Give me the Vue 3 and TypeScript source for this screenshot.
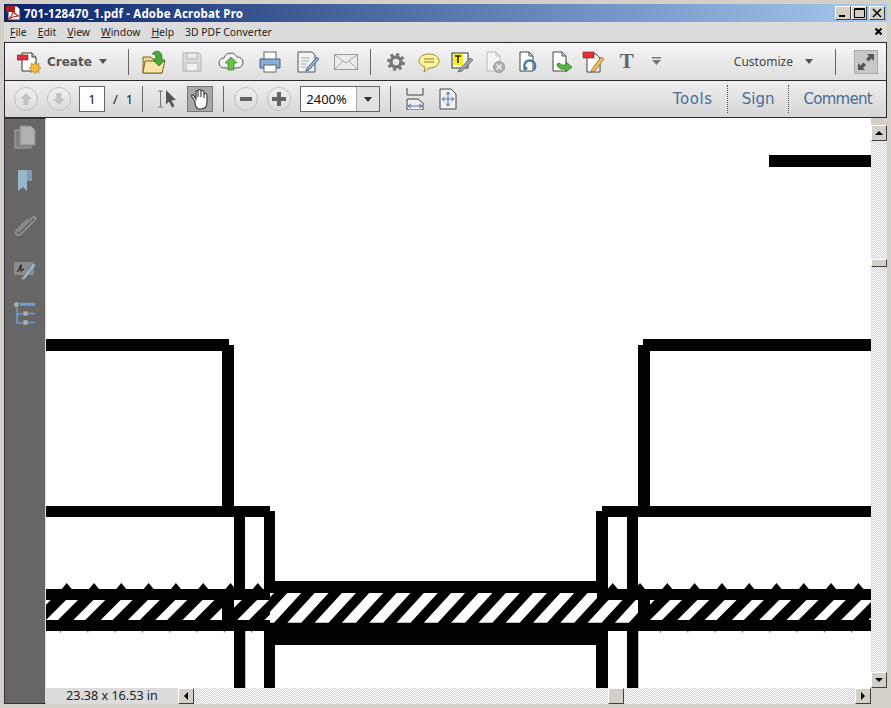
<script setup lang="ts">
type Box = [number, number, number, number]

// drawing coordinates are page pixels, the svg viewBox starts at the canvas corner
const boxes: Box[] = [
  [769, 155, 871, 167],
  [46, 339, 229, 351],
  [222, 345, 234, 511],
  [643, 339, 871, 351],
  [638, 345, 650, 511],
  [46, 506, 270, 517],
  [602, 506, 871, 517],
  [234, 517, 245, 688],
  [264, 511, 275, 688],
  [596, 511, 608, 688],
  [627, 517, 638, 688],
  [46, 589, 270, 631],
  [602, 589, 871, 631],
  [270, 581, 602, 645],
]

// black that sits over the hatching
const overlays: Box[] = [
  [222, 600, 234, 620],
  [597, 593, 640, 600],
]

const PITCH = 27.3

function range(start: number, end: number, step: number) {
  const out: number[] = []
  for (let x = start; x < end; x += step) out.push(x)
  return out
}

function stripe(x: number, top: number, bottom: number, w: number, dx: number) {
  return `${x + dx},${top} ${x + dx + w},${top} ${x + w},${bottom} ${x},${bottom}`
}

const leftStripes = range(46 - PITCH, 270, PITCH).map((x) => stripe(x, 600, 620, 12, 20))
const midStripes = range(260 - PITCH, 638, PITCH).map((x) => stripe(x, 593, 622.7, 14, 27.3))
const rightStripes = range(650 - PITCH, 871, PITCH).map((x) => stripe(x, 600, 620, 12, 20))

const peaks = [...range(66.7, 270, PITCH), ...range(612.7, 871, PITCH)]
const ticks = [...range(60, 270, PITCH), ...range(660, 871, PITCH)]
</script>

<template>
  <div class="window">
    <div class="titlebar">
      <svg class="pdf-icon" width="16" height="16" viewBox="0 0 16 16">
        <path d="M2 1h9l3 3v11H2z" fill="#fff" stroke="#333" />
        <path d="M0 1h9v6H0z" fill="#b01c1c" />
        <path d="M3 14c2-2 4-6 4-9 1 3 3 5 6 6-3 0-7 1-10 3z" fill="none" stroke="#c22" stroke-width="1.2" />
      </svg>
      <span class="title-text">701-128470_1.pdf - Adobe Acrobat Pro</span>
      <div class="caption-btns">
        <button class="cap"><svg width="10" height="10"><rect x="1" y="7" width="6" height="2" fill="#000" /></svg></button>
        <button class="cap"><svg width="11" height="10"><path d="M.5 .5h10v9H.5zM.5 1.5h10" fill="none" stroke="#000" /></svg></button>
        <button class="cap close"><svg width="10" height="10"><path d="M1 1l8 8M9 1l-8 8" stroke="#000" stroke-width="1.5" /></svg></button>
      </div>
    </div>

    <div class="menubar">
      <span class="menu"><u>F</u>ile</span>
      <span class="menu"><u>E</u>dit</span>
      <span class="menu"><u>V</u>iew</span>
      <span class="menu"><u>W</u>indow</span>
      <span class="menu"><u>H</u>elp</span>
      <span class="menu">3D PDF Converter</span>
      <svg class="menu-close" width="9" height="9"><path d="M1.5 1.5l6 6M7.5 1.5l-6 6" stroke="#000" stroke-width="2.2" /></svg>
    </div>

    <div class="toolbar top">
      <svg class="create-icon" width="24" height="24" viewBox="0 0 24 24">
        <path d="M5 3h10l4 4v14H5z" fill="#fff" stroke="#333" />
        <path d="M15 3v4h4" fill="#ddd" stroke="#333" />
        <rect x="0" y="5" width="11" height="5" fill="#e0303a" stroke="#8a1a20" stroke-width=".6" />
        <path d="M18 12l1.500 2.500 2.500-1-.5 2.800 2.500 1.700-2.500 1.700.5 2.800-2.500-1-1.500 2-1.500-2-2.500 1 .5-2.800-2.500-1.700 2.500-1.700-.5-2.800 2.500 1z" fill="#f4bc3c" stroke="#a9781c" stroke-width=".7" />
      </svg>
      <span class="create-label">Create</span>
      <span class="caret create-caret"></span>
      <i class="sep sep-a"></i>

      <div class="icons wide">
        <svg width="24" height="26" viewBox="0 0 24 26">
          <path d="M1 8h8l2 2h9v14H1z" fill="#f0d890" stroke="#7a6420" />
          <path d="M3 12h20l-3 12H1z" fill="#f7e4a8" stroke="#7a6420" />
          <path d="M10 5c3-4 9-4 10 2v4h3l-6 6-6-6h3V8c-1-3-3-3-4-3z" fill="#4aa83c" stroke="#256f1c" stroke-width=".7" />
        </svg>
        <svg width="24" height="24" viewBox="0 0 24 24">
          <path d="M3 3h16l2 2v16H3z" fill="#dcdcdc" stroke="#b4b4b4" />
          <rect x="7" y="3" width="10" height="6" fill="#ececec" stroke="#b4b4b4" />
          <rect x="6" y="13" width="12" height="8" fill="#f0f0f0" stroke="#b4b4b4" />
        </svg>
        <svg width="26" height="24" viewBox="0 0 26 24">
          <path d="M6 18a5 5 0 0 1 0-10 7 7 0 0 1 13-1 5.500 5.500 0 0 1 1 11z" fill="#f2f2f2" stroke="#5c5c5c" />
          <path d="M13 7l6 6h-3v7h-6v-7H7z" fill="#66c04c" stroke="#2f7f24" stroke-width=".7" />
        </svg>
        <svg width="24" height="24" viewBox="0 0 24 24">
          <rect x="6" y="2" width="12" height="8" fill="#fff" stroke="#666" />
          <path d="M2 9h20v9H2z" fill="#86aed8" stroke="#45607e" />
          <rect x="6" y="15" width="12" height="7" fill="#fff" stroke="#666" />
        </svg>
        <svg width="24" height="24" viewBox="0 0 24 24">
          <path d="M2 2h14l3 3v17H2z" fill="#f4f4f4" stroke="#555" />
          <path d="M5 8h9M5 11h8M5 14h6M5 17h5" stroke="#aaa" />
          <path d="M11 18l10-11 2 2-10 11-3 1z" fill="#8eb2d8" stroke="#35506e" stroke-width=".8" />
        </svg>
        <svg width="24" height="24" viewBox="0 0 24 24">
          <rect x=".5" y="4.500" width="23" height="15" fill="#ececec" stroke="#9a9a9a" />
          <path d="M1 5l11 8 11-8M1 19l8-8M23 19l-8-8" fill="none" stroke="#a8a8a8" />
        </svg>
      </div>
      <i class="sep sep-b"></i>

      <div class="icons narrow">
        <svg width="24" height="24" viewBox="0 0 24 24">
          <circle cx="12" cy="12" r="5" fill="none" stroke="#777" stroke-width="3.500" />
          <circle cx="12" cy="12" r="7.500" fill="none" stroke="#777" stroke-width="3" stroke-dasharray="2.900 2.990" />
        </svg>
        <svg width="24" height="24" viewBox="0 0 24 24">
          <path d="M12 4c6 0 10 3 10 7s-4 7-10 7l-5 4 1-5c-3-1-6-3-6-6 0-4 4-7 10-7z" fill="#fdf39c" stroke="#9a8a2c" />
          <path d="M7 9h10M7 12h10" stroke="#8a7c30" />
        </svg>
        <svg width="24" height="24" viewBox="0 0 24 24">
          <rect x="2" y="3" width="16" height="15" fill="#fff" stroke="#333" />
          <rect x="3" y="4" width="10" height="11" fill="#fcec20" />
          <path d="M5 6h6M8 6v7" stroke="#222" stroke-width="1.500" />
          <path d="M9 20l11-12 3 2-11 11-4 1z" fill="#9aa2ac" stroke="#555" stroke-width=".7" />
        </svg>
        <svg width="24" height="24" viewBox="0 0 24 24">
          <path d="M4 2h9l4 4v15H4z" fill="#f4f4f4" stroke="#bababa" />
          <path d="M13 2v4h4" fill="none" stroke="#bababa" />
          <circle cx="16" cy="17" r="5.500" fill="#b0b0b0" stroke="#999" />
          <path d="M13.500 14.500l5 5M18.500 14.500l-5 5" stroke="#f0f0f0" stroke-width="1.400" />
        </svg>
        <svg width="24" height="24" viewBox="0 0 24 24">
          <path d="M4 2h9l4 4v15H4z" fill="#fff" stroke="#444" />
          <path d="M13 2v4h4" fill="none" stroke="#444" />
          <path d="M10 20a5.500 5.500 0 1 1 7.500 0" fill="none" stroke="#4a78ac" stroke-width="2.400" />
          <path d="M7 20l5-1-2-3z" fill="#4a78ac" />
        </svg>
        <svg width="24" height="24" viewBox="0 0 24 24">
          <path d="M4 2h9l4 4v15H4z" fill="#fff" stroke="#444" />
          <path d="M13 2v4h4" fill="none" stroke="#444" />
          <path d="M8 14c0 4 4 6 9 5v3l6-5-6-5v3c-4 0-6 0-6-2z" fill="#5cb23e" stroke="#2d7720" stroke-width=".7" />
        </svg>
        <svg width="24" height="24" viewBox="0 0 24 24">
          <path d="M5 4h9l4 4v14H5z" fill="#fff" stroke="#444" />
          <rect x="1" y="2" width="11" height="6" fill="#e0303a" stroke="#8a1a20" stroke-width=".6" />
          <path d="M10 19l9-12 3 2-9 12-4 1z" fill="#f0b860" stroke="#9c6a20" stroke-width=".8" />
        </svg>
        <span class="text-tool">T</span>
      </div>

      <svg class="more" width="9" height="9" viewBox="0 0 9 9">
        <path d="M0 0h9v1.500H0zM0 3h9L4.500 8z" fill="#777" />
      </svg>
      <span class="customize">Customize</span>
      <span class="caret customize-caret"></span>
      <i class="sep sep-c"></i>
      <span class="expand">
        <svg width="20" height="20" viewBox="0 0 20 20">
          <path d="M11 2h7v7l-2.500-2.500-3 3-2.500-2.500 3-3zM9 18H2v-7l2.500 2.500 3-3 2.500 2.500-3 3z" fill="#555" />
        </svg>
      </span>
    </div>

    <div class="toolbar second">
      <span class="round"><svg width="14" height="14" viewBox="0 0 14 14"><path d="M7 1l6 6H9.500v6h-5V7H1z" fill="#c2c2c2" /></svg></span>
      <span class="round next"><svg width="14" height="14" viewBox="0 0 14 14"><path d="M7 13L1 7h3.500V1h5v6H13z" fill="#c2c2c2" /></svg></span>
      <span class="page-box">1</span>
      <span class="page-total">/</span>
      <span class="page-count">1</span>
      <i class="sep sep-d"></i>
      <svg class="select-tool" width="20" height="20" viewBox="0 0 20 20">
        <path d="M1 2h5M1 18h5M3.500 2v16" stroke="#777" fill="none" />
        <path d="M9 1l10 10-4.500 .5 3 5.500-2.500 1.500-3-6-3 3z" fill="#555" />
      </svg>
      <span class="hand">
        <svg width="20" height="21" viewBox="0 0 20 21">
          <path d="M5 12L2 8c-1-2 1-3 2-1l2 3V3c0-2 2-2 2 0v5-6c0-2 3-2 3 0v6-5c0-2 3-2 3 0v6-3c0-2 3-2 3 0v7c0 4-2 7-6 7H9c-2 0-3-2-4-5z" fill="#fff" stroke="#333" stroke-width="1.100" />
        </svg>
      </span>
      <i class="sep sep-e"></i>
      <span class="round zoom-out"><svg width="14" height="14" viewBox="0 0 14 14"><rect x="1" y="5" width="12" height="4" fill="#666" /></svg></span>
      <span class="round zoom-in"><svg width="16" height="16" viewBox="0 0 16 16"><path d="M6 1h4v5h5v4h-5v5H6v-5H1V6h5z" fill="#666" /></svg></span>
      <div class="zoom-box">
        <span class="zoom-value">2400%</span>
        <span class="zoom-drop"><span class="caret dark"></span></span>
      </div>
      <i class="sep sep-f"></i>
      <svg class="fit-width" width="18" height="22" viewBox="0 0 18 22">
        <path d="M1 0v7h16V0" fill="#e8e8e8" stroke="#444" />
        <path d="M1 11h11l5 4v7H1z" fill="#eee" stroke="#444" />
        <path d="M2 18h14M2 18l3-2M2 18l3 2M16 18l-3-2M16 18l-3 2" stroke="#4a72b0" fill="none" />
      </svg>
      <svg class="fit-page" width="18" height="22" viewBox="0 0 18 22">
        <path d="M1 1h11l5 5v15H1z" fill="#f2f2f2" stroke="#444" />
        <path d="M9 4v14M3 11h12M9 4L7 6.500M9 4l2 2.500M9 18l-2-2.500M9 18l2-2.500M3 11l2.500-2M3 11l2.500 2M15 11l-2.500-2M15 11l-2.500 2" stroke="#4a72b0" fill="none" />
      </svg>
      <span class="pane tools">Tools</span>
      <i class="dots"></i>
      <span class="pane">Sign</span>
      <i class="dots"></i>
      <span class="pane comment">Comment</span>
    </div>

    <div class="workspace">
      <aside class="sidebar">
        <svg width="24" height="24" viewBox="0 0 24 24">
          <rect x="2" y="5" width="16" height="18" fill="#808080" stroke="#a4a4a4" />
          <path d="M7 1h11l4 4v15H7z" fill="#b0b0b0" stroke="#8a8a8a" />
        </svg>
        <svg width="24" height="24" viewBox="0 0 24 24">
          <path d="M5 1h14v11h-5v10l-4-4-5 4z" fill="#9ab4c8" />
          <path d="M14 1h5v11h-5z" fill="#7e9cb6" />
        </svg>
        <svg width="24" height="24" viewBox="0 0 24 24">
          <path d="M5 19L19 5c3-3 5 0 3 2L8 21c-4 3-7-1-4-4L15 6" fill="none" stroke="#9a9a9a" stroke-width="1.400" />
        </svg>
        <svg width="24" height="24" viewBox="0 0 24 24">
          <rect x="1" y="5" width="20" height="13" fill="#8c8c8c" />
          <path d="M4 15c2-1 3-6 4-7 1 1-1 5 0 6l3-2" fill="none" stroke="#222" stroke-width="1.200" />
          <path d="M9 21l11-15 3 2-11 14-4 1z" fill="#9ab4c8" stroke="#666" stroke-width=".5" />
        </svg>
        <svg width="24" height="24" viewBox="0 0 24 24">
          <path d="M4 4v18h6M4 13h6M7 4h15M7 2.500h15" fill="none" stroke="#6f9fd0" stroke-width="1.500" />
          <rect x="1" y="1" width="5" height="5" fill="#b0b0b0" stroke="#555" stroke-width=".5" />
          <rect x="10" y="10" width="5" height="5" fill="#b0b0b0" stroke="#555" stroke-width=".5" />
          <rect x="10" y="19" width="5" height="5" fill="#b0b0b0" stroke="#555" stroke-width=".5" />
          <path d="M15 12.500h7M15 21.500h7" stroke="#6f9fd0" stroke-width="1.500" />
        </svg>
      </aside>

      <div class="center">
        <svg class="page" width="825" height="570" viewBox="46 118 825 570">
          <defs>
            <clipPath id="clip-left"><rect x="46" y="590" width="224" height="40" /></clipPath>
            <clipPath id="clip-mid"><rect x="270" y="590" width="368" height="40" /></clipPath>
            <clipPath id="clip-right"><rect x="650" y="590" width="221" height="40" /></clipPath>
          </defs>
          <rect v-for="(b, i) in boxes" :key="i" :x="b[0]" :y="b[1]" :width="b[2] - b[0]" :height="b[3] - b[1]" shape-rendering="crispEdges" />
          <g clip-path="url(#clip-left)" fill="#fff">
            <polygon v-for="(s, i) in leftStripes" :key="i" :points="s" />
          </g>
          <g clip-path="url(#clip-mid)" fill="#fff">
            <polygon v-for="(s, i) in midStripes" :key="i" :points="s" />
          </g>
          <g clip-path="url(#clip-right)" fill="#fff">
            <polygon v-for="(s, i) in rightStripes" :key="i" :points="s" />
          </g>
          <rect v-for="(b, i) in overlays" :key="'o' + i" :x="b[0]" :y="b[1]" :width="b[2] - b[0]" :height="b[3] - b[1]" shape-rendering="crispEdges" />
          <polygon v-for="x in peaks" :key="'p' + x" :points="`${x - 5},589 ${x},583 ${x + 5},589`" />
          <rect v-for="x in ticks" :key="'t' + x" :x="x" y="631" width="1" height="1.500" fill="#555" />
          <rect x="245" y="631" width="1" height="57" fill="#bbb" />
          <rect x="638" y="631" width="1" height="57" fill="#bbb" />
        </svg>
        <div class="statusbar">
          <span class="page-size">23.38 x 16.53 in</span>
          <button class="arrow"><svg width="6" height="8"><path d="M5 0v8L1 4z" /></svg></button>
          <div class="h-track"><span class="h-thumb"></span></div>
          <button class="arrow"><svg width="6" height="8"><path d="M1 0v8l4-4z" /></svg></button>
        </div>
      </div>

      <div class="v-scroll">
        <span class="v-gap"></span>
        <button class="arrow v"><svg width="8" height="6"><path d="M0 5h8L4 1z" /></svg></button>
        <div class="v-track"><span class="v-thumb"></span></div>
        <button class="arrow v"><svg width="8" height="6"><path d="M0 1h8L4 5z" /></svg></button>
        <span class="corner"></span>
      </div>
    </div>
  </div>
</template>

<style scoped>
.window {
  width: 891px;
  height: 708px;
  box-sizing: border-box;
  padding: 4px;
  background: #d4d0c8;
  display: flex;
  flex-direction: column;
  overflow: hidden;
  font-family: "DejaVu Sans", sans-serif;
  color: #222;
}
.titlebar {
  height: 18px;
  flex: none;
  display: flex;
  align-items: center;
  background: linear-gradient(90deg, #0a246a, #a6caf0);
  color: #fff;
}
.pdf-icon {
  margin: 0 2px 0 2px;
}
.title-text {
  font: bold 11.500px "Noto Sans", sans-serif;
  letter-spacing: 0.17px;
  white-space: nowrap;
}
.caption-btns {
  margin-left: auto;
  margin-right: 2px;
  display: flex;
}
.cap {
  width: 16px;
  height: 14px;
  padding: 0;
  margin: 0;
  display: flex;
  align-items: center;
  justify-content: center;
  background: #d4d0c8;
  border: 1px solid;
  border-color: #fff #404040 #404040 #fff;
}
.close {
  margin-left: 2px;
}
.menubar {
  height: 19px;
  flex: none;
  display: flex;
  align-items: center;
  padding-left: 6px;
  background: #dcdcdc;
  font: 10.400px "Noto Sans", sans-serif;
  color: #222;
}
.menu {
  margin-right: 11px;
}
.menu-close {
  margin-left: auto;
  margin-right: 4px;
}
.toolbar {
  flex: none;
  box-sizing: border-box;
  display: flex;
  align-items: center;
  border: 1px solid #2c2c2c;
  border-width: 1px 1px 0 1px;
}
.top {
  height: 38px;
  margin-top: 1px;
  padding-left: 12px;
  background: linear-gradient(#f6f6f6, #dedede);
  border-bottom: 0;
}
.second {
  height: 38px;
  padding-left: 9px;
  background: linear-gradient(#eeeeee, #d6d6d6);
  border-width: 1px;
  margin-top: 0;
}
.create-label {
  margin-left: 6px;
  font: bold 12px "DejaVu Sans", sans-serif;
  color: #555;
}
.caret {
  width: 0;
  height: 0;
  border: 4px solid transparent;
  border-top: 5px solid #555;
  border-bottom: 0;
}
.create-caret {
  margin-left: 7px;
}
.sep {
  width: 1px;
  height: 26px;
  background: #666;
  flex: none;
}
.sep-a {
  margin-left: 21px;
  margin-right: 13px;
}
.icons {
  display: flex;
  align-items: center;
}
.wide {
  gap: 14px;
}
.narrow {
  gap: 9px;
}
.sep-b {
  margin: 0 13px 0 12px;
}
.text-tool {
  width: 24px;
  text-align: center;
  font: bold 21px "Liberation Serif", serif;
  color: #666;
}
.more {
  margin-left: 13px;
}
.customize {
  margin-left: 73px;
  font: 12px "Noto Sans", sans-serif;
  color: #444;
}
.customize-caret {
  margin-left: 12px;
}
.sep-c {
  margin-left: 22px;
  margin-right: 18px;
}
.expand {
  width: 22px;
  height: 22px;
  display: flex;
  align-items: center;
  justify-content: center;
  background: #c8c8c8;
  border: 1px solid #aaa;
}
.round {
  width: 22px;
  height: 22px;
  flex: none;
  border-radius: 50%;
  border: 1px solid #bdbdbd;
  background: linear-gradient(#f0f0f0, #dcdcdc);
  display: flex;
  align-items: center;
  justify-content: center;
}
.next {
  margin-left: 9px;
}
.page-box {
  margin-left: 8px;
  width: 24px;
  height: 24px;
  border: 1px solid #666;
  background: #fff;
  text-align: center;
  font: 13px/24px "Noto Sans", sans-serif;
  color: #111;
}
.page-total {
  margin-left: 8px;
  font: 13px "Noto Sans", sans-serif;
}
.page-count {
  margin-left: 8px;
  font: 13px "Noto Sans", sans-serif;
}
.sep-d {
  margin-left: 9px;
}
.select-tool {
  margin-left: 14px;
}
.hand {
  margin-left: 10px;
  width: 24px;
  height: 24px;
  display: flex;
  align-items: center;
  justify-content: center;
  background: #a9a9a9;
  border: 1px solid #777;
}
.sep-e {
  margin-left: 10px;
}
.zoom-out {
  margin-left: 10px;
}
.zoom-in {
  margin-left: 9px;
}
.zoom-box {
  margin-left: 9px;
  width: 80px;
  height: 26px;
  box-sizing: border-box;
  border: 1px solid #666;
  background: #fff;
  display: flex;
}
.zoom-value {
  flex: 1;
  padding-left: 5px;
  font: 13px/24px "Noto Sans", sans-serif;
  color: #111;
}
.zoom-drop {
  width: 22px;
  border-left: 1px solid #aaa;
  background: #e2e2e2;
  display: flex;
  align-items: center;
  justify-content: center;
}
.dark {
  border-top-color: #333;
}
.sep-f {
  margin-left: 10px;
}
.fit-width {
  margin-left: 15px;
}
.fit-page {
  margin-left: 15px;
}
.pane {
  font: 15px "DejaVu Sans", sans-serif;
  color: #4a6c98;
}
.tools {
  margin-left: auto;
  letter-spacing: 0.6px;
}
.comment {
  letter-spacing: -0.7px;
  margin-right: 14px;
}
.dots {
  width: 1px;
  height: 28px;
  margin: 0 13px 0 14px;
  border-left: 1px dotted #555;
}
.workspace {
  flex: 1;
  min-height: 0;
  display: flex;
}
.sidebar {
  width: 42px;
  flex: none;
  background: #666;
  border: 1px solid #333;
  border-right-color: #ddd;
  display: flex;
  flex-direction: column;
  align-items: center;
  gap: 20px;
  padding-top: 6px;
  box-sizing: border-box;
}
.center {
  width: 825px;
  flex: none;
  display: flex;
  flex-direction: column;
}
.page {
  display: block;
  background: #fff;
  flex: none;
}
.statusbar {
  height: 16px;
  flex: none;
  display: flex;
  background: #d4d0c8;
}
.page-size {
  width: 132px;
  padding-left: 20px;
  box-sizing: border-box;
  background: #dcdcdc;
  font: 12.600px/16px "Noto Sans", sans-serif;
  color: #222;
}
.arrow {
  width: 16px;
  height: 16px;
  padding: 0;
  flex: none;
  display: flex;
  align-items: center;
  justify-content: center;
  background: #d4d0c8;
  border: 1px solid;
  border-color: #fff #404040 #404040 #fff;
}
.h-track,
.v-track {
  flex: 1;
  background: repeating-conic-gradient(#d4d0c8 0 25%, #fff 0 50%) 0 0 / 2px 2px;
}
.h-track {
  padding-left: 414px;
}
.h-thumb {
  display: block;
  width: 16px;
  height: 16px;
  box-sizing: border-box;
  background: #d4d0c8;
  border: 1px solid;
  border-color: #fff #404040 #404040 #fff;
}
.v-scroll {
  width: 16px;
  flex: none;
  display: flex;
  flex-direction: column;
  background: #d4d0c8;
}
.v-gap {
  height: 7px;
}
.v-track {
  padding-top: 118px;
}
.v-thumb {
  display: block;
  height: 8px;
  box-sizing: border-box;
  background: #d4d0c8;
  border: 1px solid;
  border-color: #fff #404040 #404040 #fff;
}
.corner {
  height: 16px;
}
</style>
